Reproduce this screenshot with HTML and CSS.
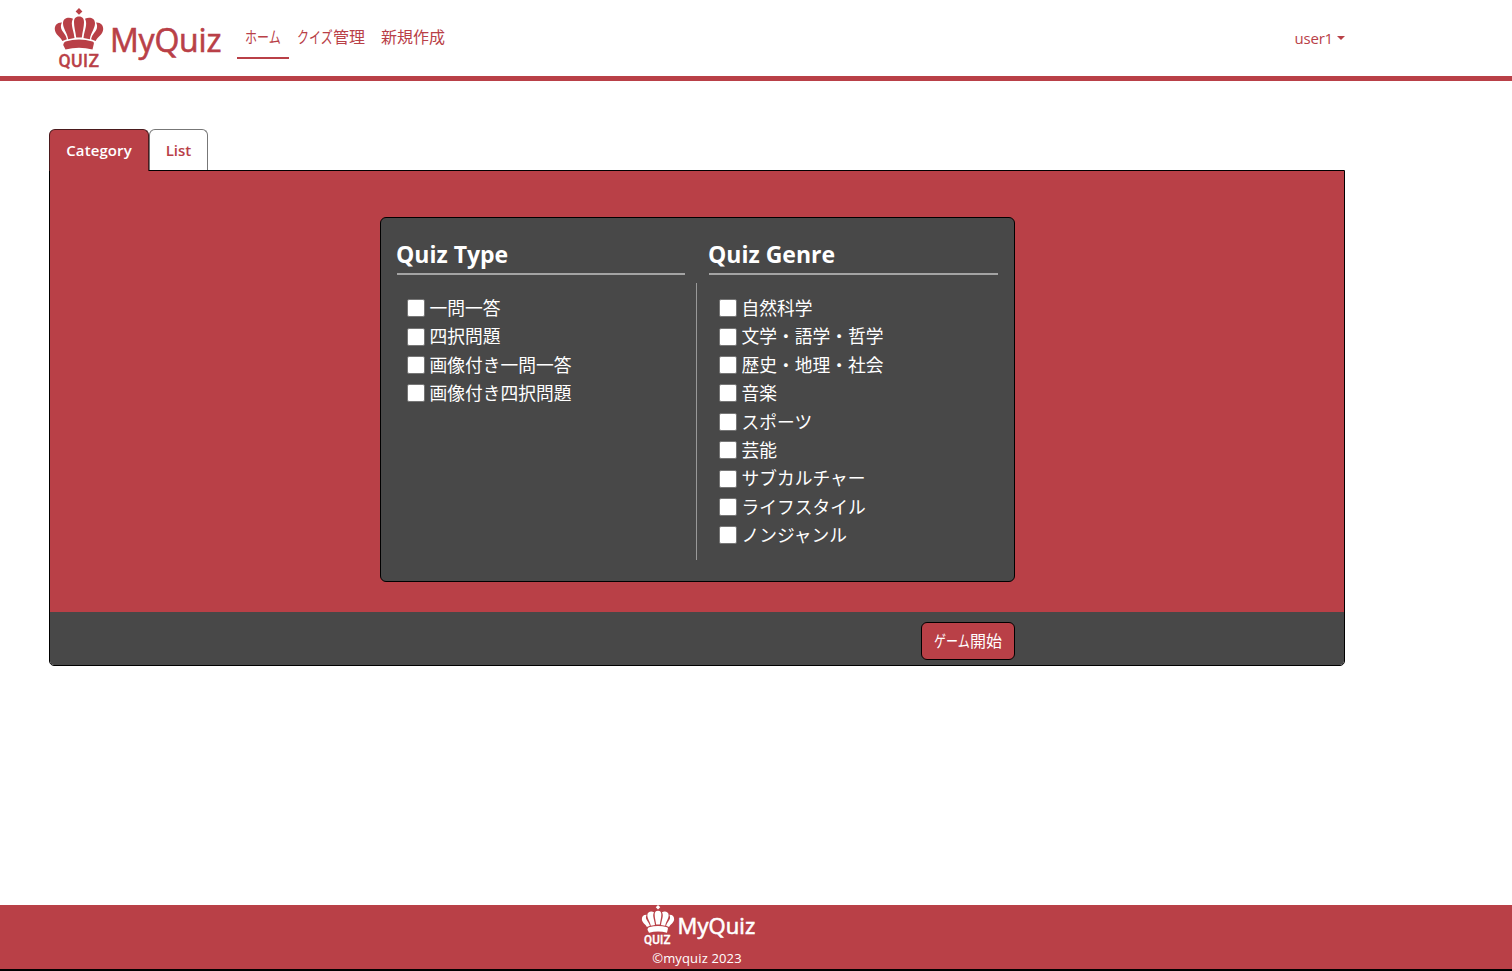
FILE: index.html
```html
<!DOCTYPE html>
<html lang="ja">
<head>
<meta charset="utf-8">
<title>MyQuiz</title>
<link rel="stylesheet" href="styles.css">
</head>
<body>
<svg class="defs" width="0" height="0" aria-hidden="true">
  <symbol id="crown" viewBox="0 0 50 42">
    <path d="M25 0l3.4 3.4L25 6.800l-3.400-3.400z"/>
    <path d="M25 8.600c3.600 0 5 2.200 5 5.600 0 5-1.500 9-2.200 15.200h-5.600C21.500 23.200 20 19.200 20 14.200c0-3.400 1.400-5.600 5-5.600z"/>
    <g id="petals">
      <path d="M19 10.700C14.500 8.800 9 10 9 15.300c0 5.400 4 9 5.200 16L20.500 30C19.800 24 18.500 21.500 18 17.500c-.4-3 0-5 1-6.800z"/>
      <path d="M8 14.500C3 14.300.6 17.500.8 21.200c.3 5.300 5.500 7.300 7.600 11.800l4.500-1.800C11.800 26 8.300 24 7.200 20.500c-.6-2.300-.2-4.200.8-6z"/>
    </g>
    <use href="#petals" transform="matrix(-1 0 0 1 50 0)"/>
    <path d="M11.500 33.500Q25 29.500 38.500 33.500Q40.200 34 39.900 35.500L38.500 41.500Q25 37.800 11.500 41.500L9.200 37Q9.500 34.100 11.500 33.500z"/>
  </symbol>
</svg>
<header class="header">
  <div class="container bar">
    <a class="brand"><span class="logo"><svg class="crown"><use href="#crown"/></svg><span class="logo-text">QUIZ</span></span><span class="brand-name">MyQuiz</span></a>
    <nav class="nav">
      <a class="nav-link active"><span class="kana">ホーム</span></a>
      <a class="nav-link"><span class="kana">クイズ</span>管理</a>
      <a class="nav-link">新規作成</a>
    </nav>
    <a class="user">user1<span class="caret"></span></a>
  </div>
</header>
<main class="container main">
  <div class="tabs"><a class="tab tab-active">Category</a><a class="tab">List</a></div>
  <section class="panel">
    <div class="panel-body">
      <form class="card">
        <div class="col">
          <h2>Quiz Type</h2>
          <div class="options">
            <label><i></i>一問一答</label>
            <label><i></i>四択問題</label>
            <label><i></i>画像付き一問一答</label>
            <label><i></i>画像付き四択問題</label>
          </div>
        </div>
        <div class="divider"></div>
        <div class="col">
          <h2>Quiz Genre</h2>
          <div class="options">
            <label><i></i>自然科学</label>
            <label><i></i>文学・語学・哲学</label>
            <label><i></i>歴史・地理・社会</label>
            <label><i></i>音楽</label>
            <label><i></i>スポーツ</label>
            <label><i></i>芸能</label>
            <label><i></i>サブカルチャー</label>
            <label><i></i>ライフスタイル</label>
            <label><i></i>ノンジャンル</label>
          </div>
        </div>
      </form>
    </div>
    <div class="panel-footer"><button class="start"><span class="kana">ゲーム</span>開始</button></div>
  </section>
</main>
<footer class="footer">
  <div class="container foot">
    <a class="brand brand-small"><span class="logo"><svg class="crown"><use href="#crown"/></svg><span class="logo-text">QUIZ</span></span><span class="brand-name">MyQuiz</span></a>
    <div class="copy">©myquiz 2023</div>
  </div>
</footer>
</body>
</html>
```
FILE: styles.css
```css
* { box-sizing: border-box; }
body {
  margin: 0;
  height: 971px;
  display: flex;
  flex-direction: column;
  overflow: hidden;
  background: #fff;
  color: #b94047;
  font: 16px/24px "Open Sans", "Noto Sans CJK JP", sans-serif;
}
.defs { position: absolute; }
.container { width: 1296px; margin-left: 49px; }
.header { height: 81px; border-bottom: 5px solid #b94047; }
.bar { height: 76px; display: flex; }
.brand { display: flex; padding: 8px 0 0 5px; width: 188px; }
.logo { display: flex; flex-direction: column; align-items: center; width: 50px; }
.crown { width: 50px; height: 42px; fill: currentColor; flex: none; }
.logo-text { font: 500 19px/19px "Roboto", sans-serif; margin-top: 1px; letter-spacing: .4px; -webkit-text-stroke: .3px currentColor; transform: scaleX(.93); }
.brand-name { font-size: 32px; line-height: 48px; margin: 8px 0 0 6px; letter-spacing: -.2px; -webkit-text-stroke: .6px currentColor; }
.nav { display: flex; height: 59px; }
.nav-link { padding: 25px 8px 0; white-space: nowrap; }
.active { width: 52px; border-bottom: 2px solid #b94047; }
/* Narrow kana: three full-width glyphs condensed to three quarters. */
.kana { display: inline-block; width: 36px; white-space: nowrap; text-align: left; transform: scaleX(.75); transform-origin: left; }
.user { height: 24px; margin: 26px 0 0 auto; font-size: 15px; letter-spacing: -.2px; display: flex; align-items: center; }
.caret { border: 4px solid transparent; border-top-color: currentColor; border-bottom: 0; margin-left: 4px; }
.main { padding-top: 48px; flex: 1; }
.tabs { display: flex; height: 42px; position: relative; }
.tab { height: 41px; border: 1px solid #777; border-bottom: 0; border-radius: 6px 6px 0 0; width: 59px; text-align: center; font-size: 15px; font-weight: 600; line-height: 41px; }
.tab-active { height: 42px; width: 100px; background: #b94047; color: #fff; border-color: #4a1a1d; letter-spacing: .1px; }
.panel { margin-top: -1px; border: 1px solid #000; border-radius: 0 0 5px 5px; overflow: hidden; height: 496px; }
.panel-body { background: #b94047; height: 441px; padding: 46px 0 0 330px; }
.card { width: 635px; height: 365px; border: 1px solid #000; border-radius: 6px; background: #484848; color: #fff; display: flex; padding: 21px 16px 21px 15px; }
.col { width: 289px; flex: none; }
.divider { width: 1px; height: 277px; background: #999; margin: 44px 12px 0 11px; flex: none; }
h2 { font-size: 23px; line-height: 30px; height: 36px; margin: 0 0 0 1px; border-bottom: 2px solid #a4a4a4; letter-spacing: 0; text-indent: -1px; }
.col + .divider + .col h2 { margin-left: 0; }
.options { padding: 19px 0 0 11px; font-size: 17.75px; line-height: 28.4px; }
.divider + .col .options { padding-left: 10px; }
.options label { display: flex; align-items: center; }
.options i { width: 18px; height: 18px; border: 1px solid #767676; border-radius: 2px; background: #fff; margin-right: 4.5px; }
.panel-footer { height: 53px; background: #484848; display: flex; padding: 10px 0 0 871px; }
.start { width: 94px; height: 38px; padding: 0; border: 1px solid #000; border-radius: 6px; background: #b94047; color: #fff; font: inherit; }
.footer { height: 66px; background: #b94047; color: #fff; border-bottom: 2px solid #000; }
.foot { display: flex; flex-direction: column; align-items: center; }
.brand-small { width: auto; padding: 0 0 0 2px; height: 41px; }
.brand-small .logo { width: 34px; }
.brand-small .crown { width: 34px; height: 28px; }
.brand-small .logo-text { font-size: 12.5px; line-height: 12px; letter-spacing: .2px; }
.brand-small .brand-name { font-size: 22px; line-height: 32px; margin: 4px 0 0 3px; letter-spacing: .1px; }
.copy { font-size: 13px; line-height: 24px; letter-spacing: .15px; }
```
